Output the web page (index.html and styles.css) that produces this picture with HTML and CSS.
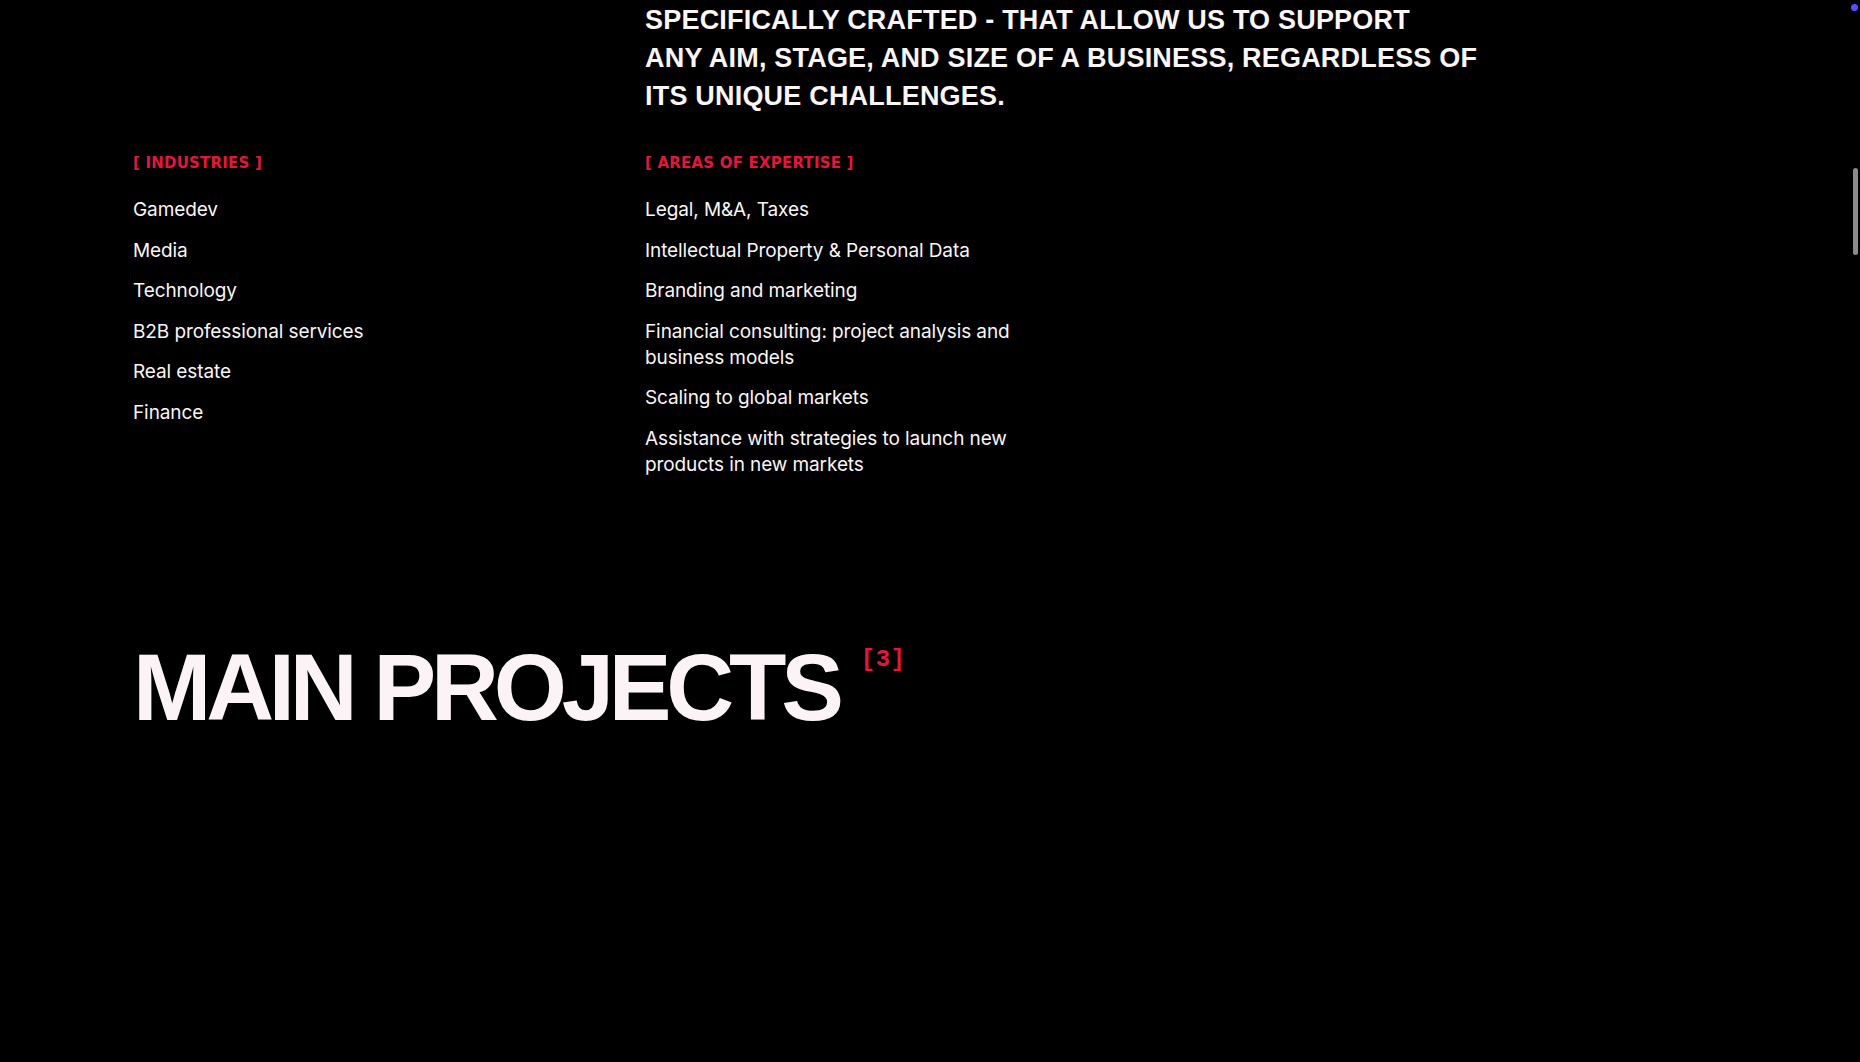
FILE: index.html
```html
<!DOCTYPE html>
<html lang="en">
<head>
<meta charset="utf-8">
<title>Main projects</title>
<link rel="stylesheet" href="styles.css">
</head>
<body>
<main class="page">
  <section class="about">
    <div class="about-aside"></div>
    <p class="lead">SPECIFICALLY CRAFTED - THAT ALLOW US TO SUPPORT<br>ANY AIM, STAGE, AND SIZE OF A BUSINESS, REGARDLESS OF<br>ITS UNIQUE CHALLENGES.</p>
    <div class="group">
      <h3 class="label">[ INDUSTRIES ]</h3>
      <ul class="list">
        <li>Gamedev</li>
        <li>Media</li>
        <li>Technology</li>
        <li>B2B professional services</li>
        <li>Real estate</li>
        <li>Finance</li>
      </ul>
    </div>
    <div class="group">
      <h3 class="label">[ AREAS OF EXPERTISE ]</h3>
      <ul class="list list-wide">
        <li>Legal, M&amp;A, Taxes</li>
        <li>Intellectual Property &amp; Personal Data</li>
        <li>Branding and marketing</li>
        <li>Financial consulting: project analysis and business models</li>
        <li>Scaling to global markets</li>
        <li>Assistance with strategies to launch new products in new markets</li>
      </ul>
    </div>
  </section>
  <section class="projects">
    <h2 class="title">MAIN PROJECTS<span class="count">[3]</span></h2>
  </section>
</main>
<div class="scroll-thumb"></div>
<div class="cursor-dot"></div>
</body>
</html>
```
FILE: styles.css
```css
html, body {
  margin: 0;
  padding: 0;
  background: #000;
  height: 100%;
  overflow: hidden;
}
body {
  color: #fbf5f6;
  font-family: "Inter", "Liberation Sans", sans-serif;
}
.page {
  padding: 1px 0 0 133px;
}
.about {
  display: grid;
  grid-template-columns: 512px 1fr;
  row-gap: 38px;
}
.lead {
  margin: 0;
  font-family: "Liberation Sans", Arial, sans-serif;
  font-weight: 700;
  font-size: 27px;
  line-height: 38px;
  letter-spacing: 0.2px;
  color: #fbf5f6;
  white-space: nowrap;
}
.group {
  display: flex;
  flex-direction: column;
  gap: 24px;
}
.label {
  margin: 0;
  font-family: "DejaVu Sans", sans-serif;
  font-weight: 700;
  font-size: 15px;
  line-height: 20px;
  color: #e3173e;
  letter-spacing: 0.2px;
}
.list {
  list-style: none;
  margin: 0;
  padding: 0;
  display: flex;
  flex-direction: column;
  gap: 14.6px;
  font-size: 19px;
  line-height: 26px;
  letter-spacing: -0.005em;
}
.list-wide {
  max-width: 400px;
}
.projects {
  padding-top: 163px;
}
.title {
  margin: 0;
  display: flex;
  align-items: flex-start;
  font-family: "Liberation Sans", Arial, sans-serif;
  font-weight: 700;
  font-size: 94px;
  line-height: 94px;
  letter-spacing: -0.055em;
  color: #fbf3f5;
}
.count {
  margin: 7px 0 0 22px;
  font-family: "Liberation Mono", monospace;
  font-weight: 700;
  font-size: 24px;
  line-height: 24px;
  letter-spacing: 0.5px;
  color: #e3173e;
}
.scroll-thumb {
  position: fixed;
  right: 2px;
  top: 168px;
  width: 5px;
  height: 87px;
  border-radius: 3px;
  background: #8c8c8c;
}
.cursor-dot {
  position: fixed;
  left: 1851px;
  top: 4px;
  width: 7px;
  height: 7px;
  border-radius: 50%;
  background: #5b4dff;
}
```
